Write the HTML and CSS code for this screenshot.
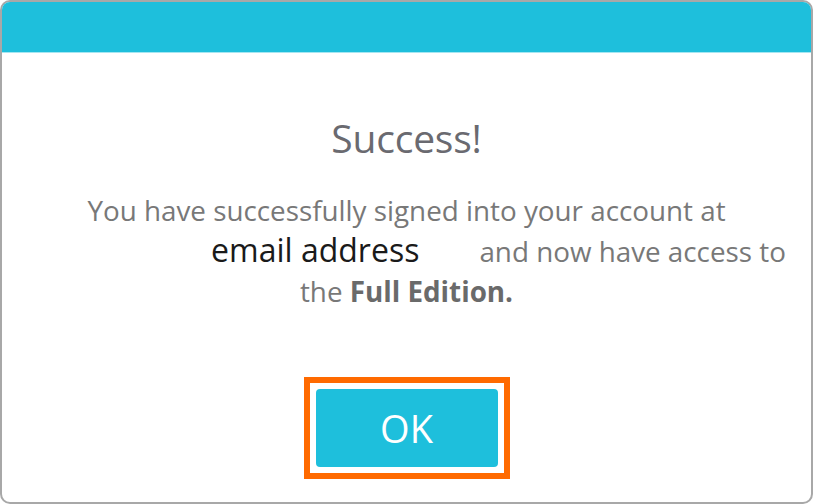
FILE: index.html
```html
<!DOCTYPE html>
<html>
<head>
<meta charset="utf-8">
<link rel="stylesheet" href="styles.css">
</head>
<body>
<div class="dialog">
  <div class="header"></div>
  <div class="content">
    <h1 class="title">Success!</h1>
    <div class="message">
      <div class="line">You have successfully signed into your account at</div>
      <div class="line line-shift"><span class="email">email address</span><span>and now have access to</span></div>
      <div class="line">the <b>Full Edition.</b></div>
    </div>
    <div class="focus">
      <button class="ok">OK</button>
    </div>
  </div>
</div>
</body>
</html>
```
FILE: styles.css
```css
html, body {
  margin: 0;
  padding: 0;
  background: #ffffff;
}
body {
  width: 813px;
  height: 504px;
  overflow: hidden;
  font-family: "Open Sans", "Noto Sans", sans-serif;
}
.dialog {
  box-sizing: border-box;
  width: 813px;
  height: 504px;
  border: 2px solid #a8a8a8;
  border-radius: 10px;
  overflow: hidden;
  background: #fff;
  display: flex;
  flex-direction: column;
}
.header {
  height: 50px;
  background: #1ebfdc;
  border-bottom: 1px solid #a6e6f1;
  flex: none;
}
.content {
  display: flex;
  flex-direction: column;
  align-items: center;
}
.title {
  margin: 62px 0 0 0;
  font-weight: 400;
  font-size: 39px;
  line-height: 46px;
  color: #6a6a70;
  letter-spacing: -0.2px;
}
.message {
  margin-top: 29px;
  width: 100%;
  color: #787878;
  font-size: 27.8px;
  line-height: 40px;
  text-align: center;
  letter-spacing: 0;
}
.line {
  white-space: nowrap;
}
.line-shift {
  padding-left: 184px;
}
.email {
  display: inline-block;
  color: #1a1a1a;
  font-size: 32px;
  padding-right: 60px;
  letter-spacing: 0;
}
.message b {
  font-weight: 700;
  color: #6a6a6a;
}
.focus {
  margin-top: 66px;
  border: 6px solid #ff6a00;
  padding: 6px;
  background: #fff;
  display: flex;
}
.ok {
  width: 182px;
  height: 78px;
  border: none;
  border-radius: 4px;
  background: #1ebfdc;
  color: #fff;
  font-family: "Open Sans", "Noto Sans", sans-serif;
  font-size: 38px;
  padding: 0;
}
```
